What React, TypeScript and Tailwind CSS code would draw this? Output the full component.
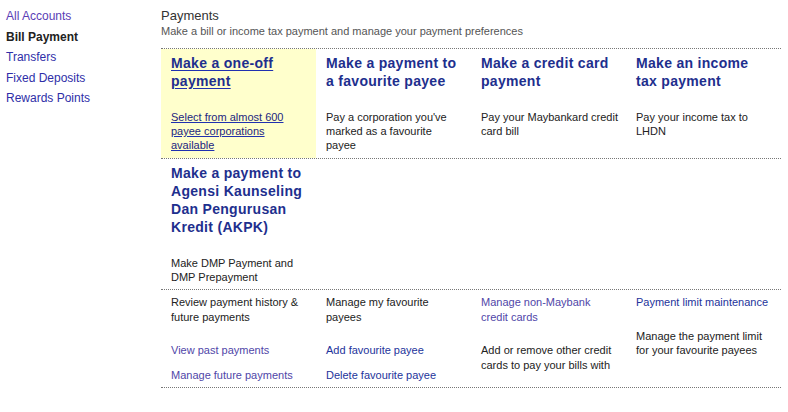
import React from "react"

const navItems = [
    { label: "All Accounts", visited: true },
    { label: "Bill Payment", active: true },
    { label: "Transfers" },
    { label: "Fixed Deposits" },
    { label: "Rewards Points" },
]

const topCards = [
    {
        title: "Make a one-off payment",
        desc: "Select from almost 600 payee corporations available",
        highlight: true,
    },
    { title: "Make a payment to a favourite payee", desc: "Pay a corporation you've marked as a favourite payee" },
    { title: "Make a credit card payment", desc: "Pay your Maybankard credit card bill" },
    { title: "Make an income tax payment", desc: "Pay your income tax to LHDN" },
]

function Title({ children, underline, className }: { children: React.ReactNode; underline?: boolean; className?: string }) {
    return (
        <div
            className={
                "text-[14px] font-bold leading-[18px] tracking-[0.3px] text-[#1e2f8e] mb-[20px] " +
                (underline ? "underline decoration-[#2030b0] underline-offset-2 " : "") +
                (className ?? "")
            }
        >
            {children}
        </div>
    )
}

export default function App() {
    return (
        <div className="w-[788px] h-[412px] bg-white flex font-['Liberation_Sans',Arial,sans-serif] text-[#222]">
            {/* left nav */}
            <div className="w-[161px] shrink-0 pl-[6px] pt-[6px]">
                {navItems.map((item) => (
                    <div
                        key={item.label}
                        className={
                            "text-[12px] leading-[20.5px] " +
                            (item.active ? "font-bold text-[#222]" : item.visited ? "text-[#5a3db5]" : "text-[#2e2ea8]")
                        }
                    >
                        {item.label}
                    </div>
                ))}
            </div>

            {/* main */}
            <div className="w-[620px] shrink-0 pt-[8px]">
                <div className="text-[13px] leading-[16px] text-[#333]">Payments</div>
                <div className="text-[11px] leading-[14px] text-[#555] mb-[10px]">
                    Make a bill or income tax payment and manage your payment preferences
                </div>

                <div className="border-t border-dotted border-[#777]">
                    <div className="grid grid-cols-4 border-b border-dotted border-[#777]">
                        {topCards.map((card) => (
                            <div
                                key={card.title}
                                className={"pl-[10px] pr-[7px] pt-[5px] pb-[6px] " + (card.highlight ? "bg-[#ffffcc]" : "")}
                            >
                                <Title underline={card.highlight} className="pr-[3px]">
                                    {card.title}
                                </Title>
                                <div
                                    className={
                                        "text-[11px] leading-[14px] " +
                                        (card.highlight ? "pr-[3px] text-[#1d2680] underline decoration-[#2030b0]" : "text-[#222]")
                                    }
                                >
                                    {card.desc}
                                </div>
                            </div>
                        ))}
                    </div>

                    <div className="grid grid-cols-4 border-b border-dotted border-[#777]">
                        <div className="px-[10px] pt-[5px] pb-[5px]">
                            <Title>Make a payment to Agensi Kaunseling Dan Pengurusan Kredit (AKPK)</Title>
                            <div className="text-[11px] leading-[14px] text-[#222]">Make DMP Payment and DMP Prepayment</div>
                        </div>
                    </div>

                    <div className="grid grid-cols-4 border-b border-dotted border-[#777] text-[11px] leading-[15px]">
                        <div className="px-[10px] pt-[5px] pb-[4px]">
                            <div className="mb-[18px]">Review payment history &amp; future payments</div>
                            <div className="text-[#5046a8] mb-[10px]">View past payments</div>
                            <div className="text-[#5046a8]">Manage future payments</div>
                        </div>
                        <div className="px-[10px] pt-[5px] pb-[4px]">
                            <div className="mb-[18px]">Manage my favourite payees</div>
                            <div className="text-[#23339b] mb-[10px]">Add favourite payee</div>
                            <div className="text-[#23339b]">Delete favourite payee</div>
                        </div>
                        <div className="px-[10px] pt-[5px] pb-[4px]">
                            <div className="text-[#5046a8] mb-[18px]">Manage non-Maybank credit cards</div>
                            <div>Add or remove other credit cards to pay your bills with</div>
                        </div>
                        <div className="px-[10px] pt-[5px] pb-[4px]">
                            <div className="text-[#23339b] mb-[19px]">Payment limit maintenance</div>
                            <div className="leading-[14px]">Manage the payment limit for your favourite payees</div>
                        </div>
                    </div>
                </div>
            </div>
        </div>
    )
}
